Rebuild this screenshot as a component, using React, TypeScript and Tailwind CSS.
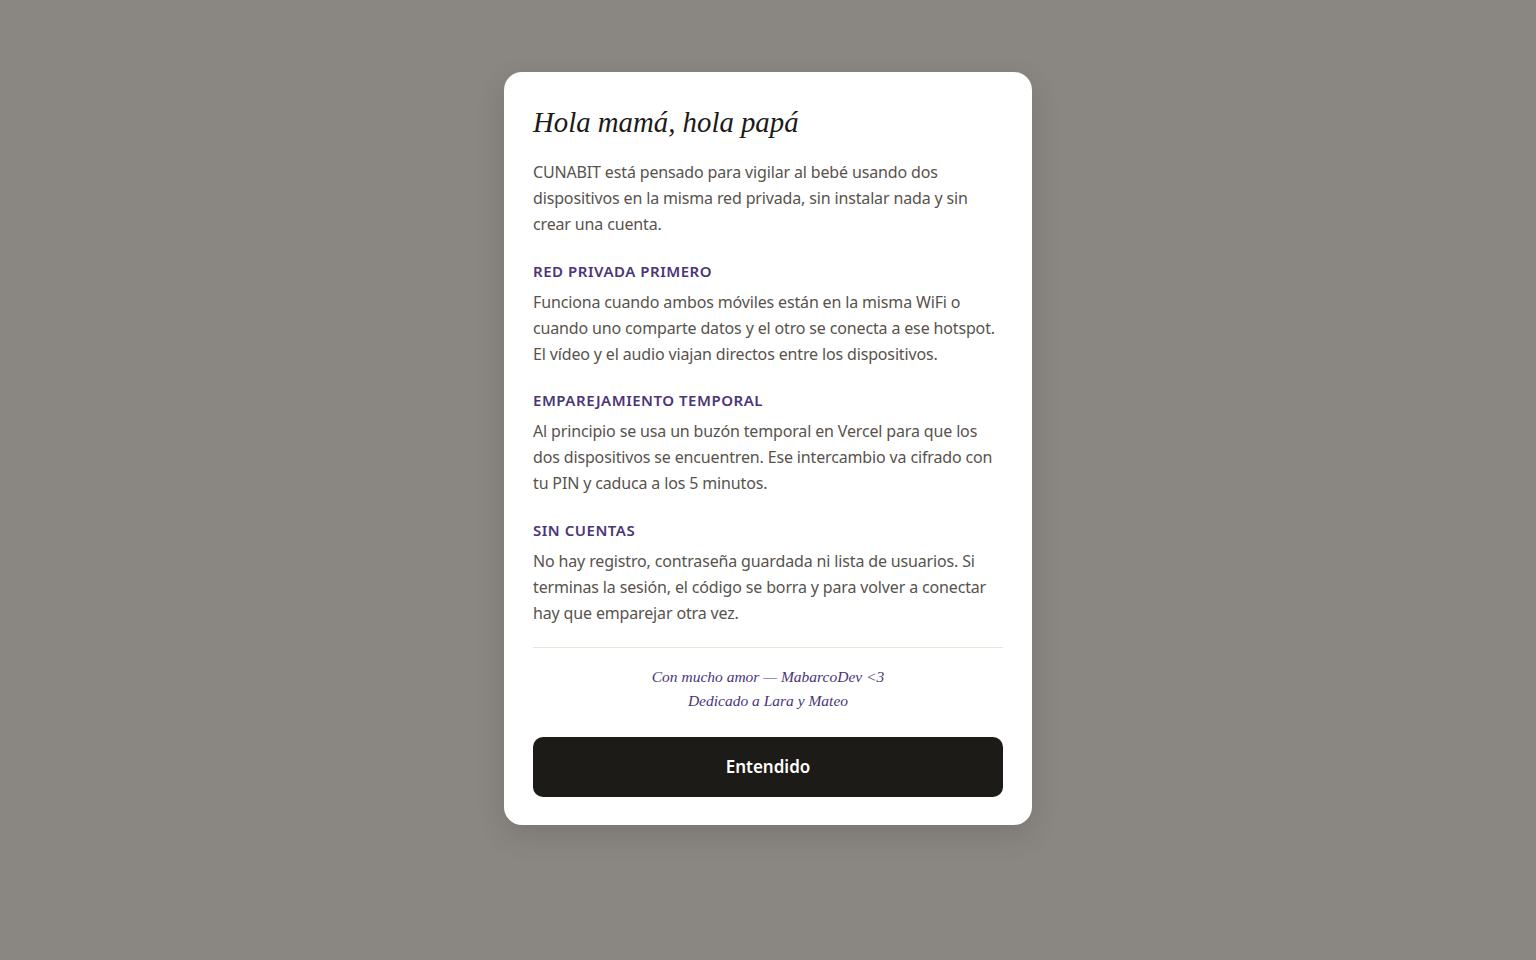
import React from "react";

const sans = "font-['Noto_Sans',sans-serif]";

function Section({ title, children }: { title: string; children: React.ReactNode }) {
  return (
    <div className="mt-[23.5px]">
      <h3 className={`${sans} text-[15px] leading-[20px] font-semibold tracking-[0.035em] text-[#4b3577]`}>{title}</h3>
      <p className={`${sans} mt-[8px] text-[16px] leading-[26px] tracking-[-0.15px] text-[#58534d]`}>{children}</p>
    </div>
  );
}

export default function App() {
  return (
    <div className="min-h-screen w-full bg-[#8a8782] flex justify-center items-start pt-[72px]">
      <div className="w-[528px] bg-white rounded-[18px] px-[29px] pt-[32px] pb-[28px] shadow-[0_10px_30px_rgba(0,0,0,0.12)]">
        <h1 className="font-['Liberation_Serif',serif] italic text-[28.8px] leading-[36px] text-[#1c1b18]">
          Hola mamá, hola papá
        </h1>
        <p className={`${sans} mt-[19px] text-[16px] leading-[26px] tracking-[-0.15px] text-[#58534d]`}>
          CUNABIT está pensado para vigilar al bebé usando dos dispositivos en la misma red privada, sin instalar nada y sin crear una cuenta.
        </p>
        <Section title="RED PRIVADA PRIMERO">
          Funciona cuando ambos móviles están en la misma WiFi o cuando uno comparte datos y el otro se conecta a ese hotspot. El vídeo y el audio viajan directos entre los dispositivos.
        </Section>
        <Section title="EMPAREJAMIENTO TEMPORAL">
          Al principio se usa un buzón temporal en Vercel para que los dos dispositivos se encuentren. Ese intercambio va cifrado con tu PIN y caduca a los 5 minutos.
        </Section>
        <Section title="SIN CUENTAS">
          No hay registro, contraseña guardada ni lista de usuarios. Si terminas la sesión, el código se borra y para volver a conectar hay que emparejar otra vez.
        </Section>
        <div className="mt-[21.5px] h-px bg-[#ede4d6]" />
        <div className="mt-[17px] text-center font-['Liberation_Serif',serif] italic text-[15.5px] leading-[24px] text-[#4b3577]">
          <div>Con mucho amor — MabarcoDev &lt;3</div>
          <div>Dedicado a Lara y Mateo</div>
        </div>
        <button className={`${sans} mt-[24px] w-full h-[60px] rounded-[10px] bg-[#1c1b18] text-white text-[17px] font-semibold`}>
          Entendido
        </button>
      </div>
    </div>
  );
}
